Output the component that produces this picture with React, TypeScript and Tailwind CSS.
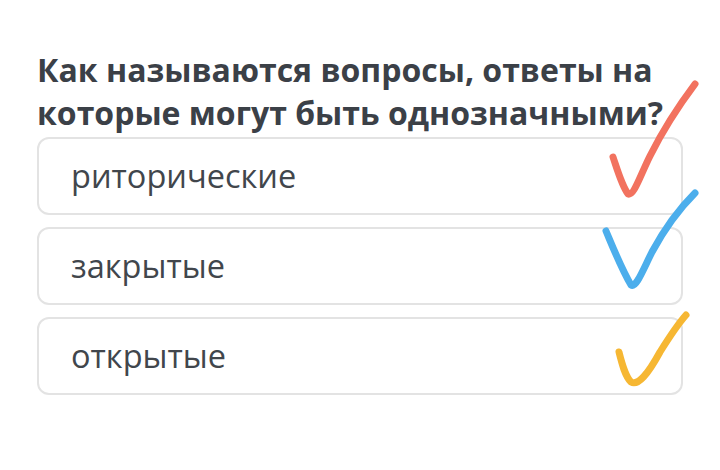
import React from "react";

const options = ["риторические", "закрытые", "открытые"];

const Ticks: React.FC = () => (
  <svg className="pointer-events-none absolute inset-0" width="720" height="470" viewBox="0 0 720 470" fill="none">
    <path
      d="M613 157 C618 172 622 186 628 194 C634 196 640 176 650 156 C664 128 680 104 695 84"
      stroke="#f2725f"
      strokeWidth="7"
      strokeLinecap="round"
      strokeLinejoin="round"
    />
    <path
      d="M606 231 C614 250 622 270 631 285 C636 288 642 272 652 252 C666 226 680 208 695 193"
      stroke="#4caeec"
      strokeWidth="7"
      strokeLinecap="round"
      strokeLinejoin="round"
    />
    <path
      d="M619 352 C622 364 625 376 631 382 C638 386 648 374 660 352 C670 336 678 324 686 315"
      stroke="#f6b733"
      strokeWidth="7"
      strokeLinecap="round"
      strokeLinejoin="round"
    />
  </svg>
);

export default function App() {
  return (
    <div className="relative h-[470px] w-[720px] overflow-hidden bg-white font-['Open_Sans',sans-serif]">
      <div className="px-[37px] pt-[48px]">
        <h1 className="text-[32px] font-bold leading-[43px] text-[#3b4047]">
          Как называются вопросы, ответы на которые могут быть однозначными?
        </h1>
        <div className="mt-[3px] flex w-[646px] flex-col gap-[12px]">
          {options.map((o) => (
            <div
              key={o}
              className="flex h-[78px] items-center rounded-[12px] border-2 border-[#e3e3e3] pl-[32px] text-[32.5px] text-[#41464c]"
            >
              {o}
            </div>
          ))}
        </div>
      </div>
      <Ticks />
    </div>
  );
}
